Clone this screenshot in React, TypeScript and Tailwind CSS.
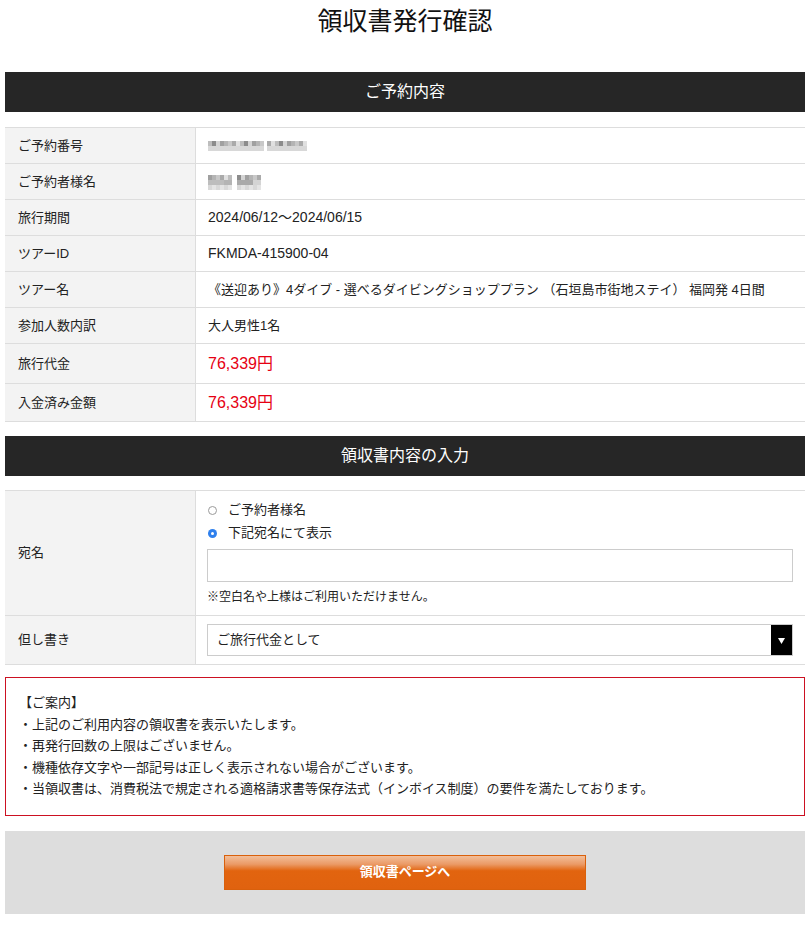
import React from "react";

const FONT = { fontFamily: '"Liberation Sans", "Noto Sans CJK JP", sans-serif' };

function Pixels({ cols, rows, seed }: { cols: number; rows: number; seed: number }) {
  const shades = ["#c8c8c8", "#b4b4b4", "#a0a0a0", "#d4d4d4", "#8c8c8c", "#bdbdbd", "#e0e0e0", "#aaaaaa"];
  const cells: React.ReactElement[] = [];
  for (let r = 0; r < rows; r++) {
    for (let c = 0; c < cols; c++) {
      const i = (c * 7 + r * 3 + seed * 5 + ((c * r) % 4)) % shades.length;
      cells.push(<rect key={`${r}-${c}`} x={c * 4} y={r * 5} width={4} height={5} fill={r === rows - 1 ? (i % 2 ? "#e4e4e4" : "#d8d8d8") : shades[i]} />);
    }
  }
  return (
    <svg width={cols * 4} height={rows * 5} className="block">
      {cells}
    </svg>
  );
}

function Row({ label, children, h = "h-[35px]" }: { label: string; children: React.ReactNode; h?: string }) {
  return (
    <div className="flex border-b border-[#dddddd]">
      <div className={`w-[191px] shrink-0 bg-[#f3f3f3] border-r border-[#dddddd] pl-[13px] flex items-center text-[13px] text-[#222] ${h}`}>{label}</div>
      <div className="flex-1 pl-[12px] flex items-center text-[13px] text-[#222]">{children}</div>
    </div>
  );
}

function Bar({ title }: { title: string }) {
  return (
    <div className="h-[40px] bg-[#262626] text-white flex items-center justify-center text-[16px]">{title}</div>
  );
}

export default function App() {
  return (
    <div style={FONT} className="w-[810px] bg-white text-[#222] pb-[15px]">
      <h1 className="text-center text-[25px] font-normal leading-none pt-[9px] h-[72px] text-[#111]">領収書発行確認</h1>
      <div className="px-[5px]">
        <Bar title="ご予約内容" />
        <div className="mt-[15px] border-t border-[#dddddd]">
          <Row label="ご予約番号">
            <div className="flex gap-[0px]">
              <Pixels cols={14} rows={2} seed={1} />
              <div className="w-[3px]" />
              <Pixels cols={10} rows={2} seed={3} />
            </div>
          </Row>
          <Row label="ご予約者様名">
            <div className="flex gap-[5px] pt-[2px]">
              <Pixels cols={6} rows={3} seed={2} />
              <Pixels cols={6} rows={3} seed={4} />
            </div>
          </Row>
          <Row label="旅行期間"><span className="text-[14px]">2024/06/12〜2024/06/15</span></Row>
          <Row label="ツアーID"><span className="text-[14px]">FKMDA-415900-04</span></Row>
          <Row label="ツアー名">《送迎あり》4ダイブ - 選べるダイビングショッププラン （石垣島市街地ステイ） 福岡発 4日間</Row>
          <Row label="参加人数内訳">大人男性1名</Row>
          <Row label="旅行代金" h="h-[39px]"><span className="text-[16px] text-[#e60012]">76,339円</span></Row>
          <Row label="入金済み金額" h="h-[37px]"><span className="text-[16px] text-[#e60012]">76,339円</span></Row>
        </div>

        <div className="mt-[14px]">
          <Bar title="領収書内容の入力" />
        </div>
        <div className="mt-[14px] border-t border-[#dddddd]">
          <div className="flex border-b border-[#dddddd]">
            <div className="w-[191px] shrink-0 bg-[#f3f3f3] border-r border-[#dddddd] pl-[13px] flex items-center text-[13px]">宛名</div>
            <div className="flex-1 pl-[11px] pr-[12px] pt-[10px] pb-[9px] text-[13px]">
              <div className="flex items-center h-[18px]">
                <span className="w-[9px] h-[9px] rounded-full border border-[#9a9a9a] bg-white mr-[11px] ml-[1px]" />
                <span>ご予約者様名</span>
              </div>
              <div className="flex items-center h-[18px] mt-[5px]">
                <span className="w-[9px] h-[9px] rounded-full bg-[#2f80ed] flex items-center justify-center mr-[11px] ml-[1px]">
                  <span className="w-[3px] h-[3px] rounded-full bg-white" />
                </span>
                <span>下記宛名にて表示</span>
              </div>
              <div className="mt-[7px] h-[33px] border border-[#cccccc] bg-white" />
              <div className="mt-[6px] text-[12px] leading-[18px]">※空白名や上様はご利用いただけません。</div>
            </div>
          </div>
          <div className="flex border-b border-[#dddddd]">
            <div className="w-[191px] shrink-0 bg-[#f3f3f3] border-r border-[#dddddd] pl-[13px] flex items-center text-[13px] h-[48px]">但し書き</div>
            <div className="flex-1 pl-[11px] pr-[12px] flex items-center">
              <div className="w-full h-[32px] border border-[#cccccc] bg-white flex items-center justify-between pl-[9px] text-[13px]">
                <span>ご旅行代金として</span>
                <span className="h-full w-[21px] bg-black flex items-center justify-center">
                  <svg width="7" height="7" viewBox="0 0 7 7"><path d="M0 1 H7 L3.5 7 Z" fill="#fff" /></svg>
                </span>
              </div>
            </div>
          </div>
        </div>

        <div className="mt-[12px] border border-[#cc1122] px-[13px] pt-[14px] pb-[15px] text-[13px] leading-[21.5px]">
          <div>【ご案内】</div>
          <div>・上記のご利用内容の領収書を表示いたします。</div>
          <div>・再発行回数の上限はございません。</div>
          <div>・機種依存文字や一部記号は正しく表示されない場合がございます。</div>
          <div>・当領収書は、消費税法で規定される適格請求書等保存法式（インボイス制度）の要件を満たしております。</div>
        </div>

        <div className="mt-[15px] bg-[#dddddd] h-[83px] flex items-center justify-center">
          <button className="w-[362px] h-[35px] border border-[#d9600c] bg-[linear-gradient(to_bottom,#f2be99_0%,#eb9a66_25%,#e2640f_45%,#e0620f_100%)] text-white text-[13px] font-bold flex items-center justify-center">
            領収書ページへ
          </button>
        </div>
      </div>
    </div>
  );
}
